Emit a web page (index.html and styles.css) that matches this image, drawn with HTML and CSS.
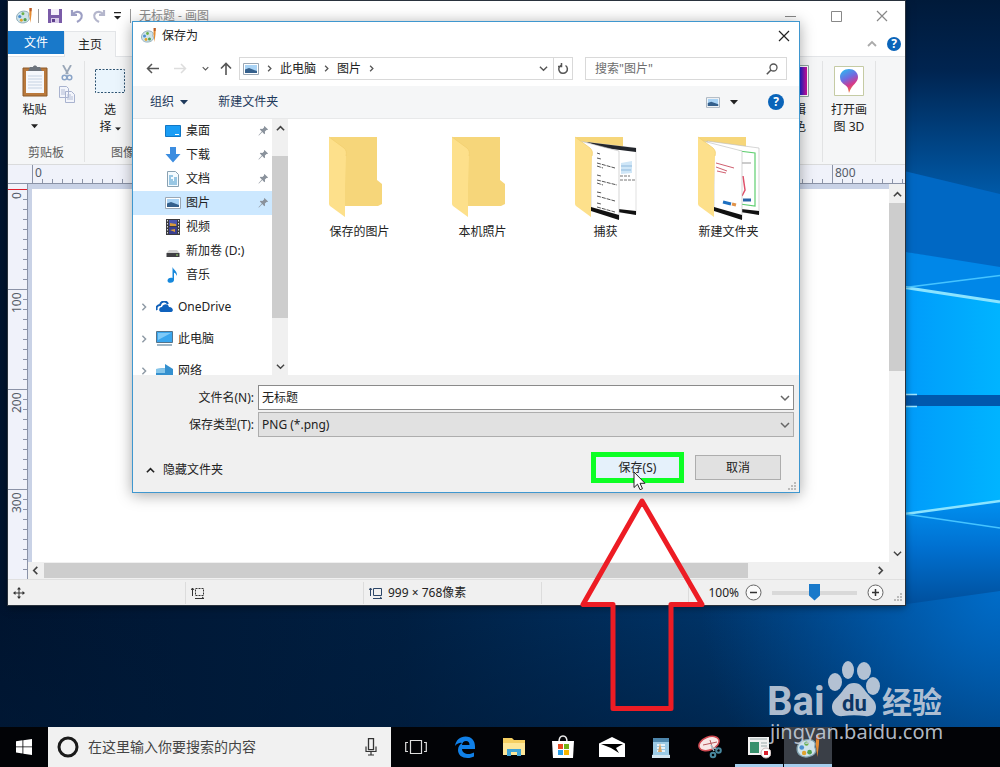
FILE: index.html
```html
<!DOCTYPE html>
<html lang="zh-CN">
<head>
  <meta charset="UTF-8">
  <title>无标题 - 画图</title>
  <link rel="stylesheet" href="styles.css">
</head>
<body>
  <!-- shared icons -->
  <svg class="defs" width="0" height="0">
    <symbol id="i-palette" viewBox="0 0 16 16">
      <path d="M1 9c0-4 4-6.500 8-6 3 .4 4 2 3.500 3.500-.3 1-.2 1.700.3 2.500.8 1.500-.8 4.500-5 5C4 14.500 1 12.500 1 9z" fill="#cfe3ea" stroke="#7fa0ae" stroke-width=".8"/>
      <circle cx="4" cy="8" r="1.500" fill="#4b8fd0"/><circle cx="7" cy="5.500" r="1.400" fill="#6bb04a"/>
      <circle cx="5.500" cy="11.500" r="1.400" fill="#e0a32e"/><circle cx="9" cy="11" r="1.500" fill="#4fa052"/>
      <path d="M13.200 0h2l-.2 6-1 8-1-8z" fill="#e58b31"/><path d="M13.200 0h2l-.1 3h-1.800z" fill="#b65a2a"/>
    </symbol>
    <symbol id="i-up" viewBox="0 0 10 10"><path d="M1 7l4-4 4 4" fill="none" stroke="currentColor" stroke-width="1.800"/></symbol>
    <symbol id="i-down" viewBox="0 0 10 10"><path d="M1 3l4 4 4-4" fill="none" stroke="currentColor" stroke-width="1.500"/></symbol>
    <symbol id="i-left" viewBox="0 0 10 10"><path d="M7 1L3 5l4 4" fill="none" stroke="currentColor" stroke-width="1.800"/></symbol>
    <symbol id="i-right" viewBox="0 0 10 10"><path d="M3 1l4 4-4 4" fill="none" stroke="currentColor" stroke-width="1.800"/></symbol>
    <symbol id="i-caret" viewBox="0 0 8 5"><path d="M0 0h8L4 4.500z" fill="currentColor"/></symbol>
    <symbol id="i-close" viewBox="0 0 12 12"><path d="M1 1l10 10M11 1L1 11" fill="none" stroke="currentColor" stroke-width="1.200"/></symbol>
    <symbol id="i-pin" viewBox="0 0 12 12">
      <path d="M7 1l4 4-1 .5-.7-.1L7.500 7.200l.2 2-.8.8L4.700 7.700 1 11.500l-.5-.4L4.200 7.200 2 5l.8-.8 2 .2 1.800-1.800-.1-.8z" fill="#8a929c"/>
    </symbol>
    <symbol id="i-picture" viewBox="0 0 16 12">
      <path d="M.5.500h15v11H.5z" fill="#fff" stroke="#9aa7b4"/>
      <path d="M2 2h12v8H2z" fill="#a9d3f5"/><path d="M2 6.500l4-1.500 8 3v2H2z" fill="#35608c"/>
    </symbol>
    <symbol id="i-folder-back" viewBox="0 0 64 84">
      <path d="M2 1h47v43l5 4v20l-4 2H16z" fill="#f6d67a"/>
    </symbol>
    <symbol id="i-folder-front" viewBox="0 0 64 84">
      <path d="M1 1l15 11c2 2 3 4 2 8l-1 30v31L2 70c-1-1-1-2-1-3z" fill="#fde08b"/>
      <path d="M1 1l15 11c2 2 3 4 2 8" fill="none" stroke="#f3cf70" stroke-width=".8"/>
    </symbol>
  </svg>

  <div class="desktop">
    <svg class="wallpaper" viewBox="0 0 1000 727" preserveAspectRatio="none" aria-hidden="true">
      <defs>
        <linearGradient id="base" x1="0" x2="1"><stop offset="0" stop-color="#00142f"/><stop offset=".4" stop-color="#001f42"/><stop offset=".7" stop-color="#003468"/><stop offset="1" stop-color="#0057a8"/></linearGradient>
        <linearGradient id="sky" x1="0" y1="0" x2="0" y2="1"><stop offset="0" stop-color="#001a3a"/><stop offset=".35" stop-color="#002450"/><stop offset="1" stop-color="#005cac"/></linearGradient>
        <linearGradient id="pane" x1="0" x2="1"><stop offset="0" stop-color="#009afa"/><stop offset="1" stop-color="#00b4ff"/></linearGradient>
        <linearGradient id="low" x1="0" y1="0" x2="0" y2="1"><stop offset="0" stop-color="#0090f0"/><stop offset=".45" stop-color="#0070d0"/><stop offset="1" stop-color="#004f9c"/></linearGradient>
        <radialGradient id="glow" gradientUnits="userSpaceOnUse" cx="1000" cy="590" r="300"><stop offset="0" stop-color="#006cc8"/><stop offset="1" stop-color="#004a92" stop-opacity="0"/></radialGradient>
        <linearGradient id="fade" x1="0" y1="0" x2="0" y2="1"><stop offset="0" stop-color="#001a38" stop-opacity="0"/><stop offset="1" stop-color="#001a38" stop-opacity=".5"/></linearGradient>
      </defs>
      <rect width="1000" height="727" fill="url(#base)"/>
      <rect y="600" width="1000" height="127" fill="url(#fade)"/>
      <path d="M700 500h300v227H700z" fill="url(#glow)"/>
      <path d="M900 0h100v200H900z" fill="url(#sky)"/>
      <path d="M900 170l100 24v75l-100-18z" fill="#0068c4"/>
      <path d="M900 251l100 16v36H900z" fill="#0087e8"/>
      <path d="M900 287l100 15v93H900z" fill="url(#pane)"/>
      <path d="M900 395h100v11H900z" fill="#0058ad"/>
      <path d="M900 406h100v96l-95 12h-5z" fill="url(#pane)"/>
      <path d="M900 514l100-13v90l-100 14z" fill="url(#low)"/>
      <path d="M905 287.500l95 14.500" stroke="#8be4ff" stroke-width="3"/>
      <path d="M905 287.500l95-12" stroke="#45c4ff" stroke-width="1.500"/>
      <path d="M905 514l95-13" stroke="#8be4ff" stroke-width="2.500"/>
      <path d="M905 514l95 14" stroke="#45c4ff" stroke-width="1.500"/>
      <path d="M905 394.500h12M905 406.500h12" stroke="#9fe6ff" stroke-width="1.500"/>
    </svg>

    <!-- Paint window -->
    <section class="paint">
      <header class="paint-title">
        <svg width="18" height="17"><use href="#i-palette"/></svg>
        <i class="bar"></i>
        <button class="qa" aria-label="保存"><svg width="14" height="14" viewBox="0 0 14 14"><path d="M0 0h14v14H0z" fill="#7a5ba8"/><path d="M3 0h8v6H3z" fill="#f4effa"/><path d="M3 9h8v5H3z" fill="#d8cbe8"/><path d="M4 10h3v3H4z" fill="#5d3f8d"/></svg></button>
        <button class="qa" aria-label="撤消"><svg width="14" height="14" viewBox="0 0 14 14"><path d="M2 1v5h5M2.500 5.500C5 2.500 9 2 11 4.500c2 2.800.5 6-4 8.500" fill="none" stroke="#9d9fc4" stroke-width="2.200"/></svg></button>
        <button class="qa" aria-label="重做"><svg width="14" height="14" viewBox="0 0 14 14"><path d="M12 1v5H7M11.500 5.500C9 2.500 5 2 3 4.500c-2 2.800-.5 6 4 8.500" fill="none" stroke="#b4b6cc" stroke-width="2.200"/></svg></button>
        <button class="qa narrow" aria-label="自定义"><svg width="7" height="8" viewBox="0 0 7 8"><path d="M0 0h7v1.200H0zM0 4h7L3.500 7.500z" fill="#222"/></svg></button>
        <i class="bar"></i>
        <h1>无标题 - 画图</h1>
        <div class="win-buttons">
          <button aria-label="最小化"><svg width="11" height="11"><path d="M0 5.500h11" stroke="#888"/></svg></button>
          <button aria-label="最大化"><svg width="11" height="11"><path d="M.5.500h10v10H.5z" fill="none" stroke="#888"/></svg></button>
          <button aria-label="关闭"><svg width="12" height="12"><use href="#i-close"/></svg></button>
        </div>
      </header>

      <nav class="tabs">
        <button class="tab file">文件</button>
        <button class="tab home">主页</button>
        <span class="grow"></span>
        <svg class="collapse" width="10" height="10"><use href="#i-up"/></svg>
        <button class="help small" aria-label="帮助">?</button>
      </nav>

      <div class="ribbon">
        <div class="group clipboard">
          <div class="group-body">
            <button class="tool">
              <svg width="26" height="32" viewBox="0 0 26 32"><path d="M1 3h24v28H1z" fill="#b9793c"/><path d="M1 3h24v28H1z" fill="none" stroke="#8c5a2b"/><path d="M4 6h18v22H4z" fill="#f5f8fc"/><path d="M6 11h14M6 14h14M6 17h14M6 20h14M6 23h14" stroke="#c5d2e2"/><path d="M8 2h3c0-2 4-2 4 0h3l2 4H6z" fill="#6d747d"/></svg>
              <span>粘贴</span>
              <svg width="7" height="5"><use href="#i-caret"/></svg>
            </button>
            <div class="minis">
              <svg width="12" height="16" viewBox="0 0 12 16"><path d="M2 0l5 9M10 0L5 9" stroke="#9aa7b8" stroke-width="1.800"/><circle cx="3.500" cy="12.500" r="2.300" fill="none" stroke="#8aa4c8" stroke-width="1.500"/><circle cx="8.500" cy="12.500" r="2.300" fill="none" stroke="#8aa4c8" stroke-width="1.500"/></svg>
              <svg width="16" height="17" viewBox="0 0 16 17"><path d="M.5.500h7l2 2v9h-9zM6.500 5.500h6l3 3v8h-9z" fill="#f3f5fb" stroke="#a9b3cf"/><path d="M2 4h4M2 6h4M2 8h4M8 9h4M8 11h6M8 13h6" stroke="#b3bdd6"/></svg>
            </div>
          </div>
          <p>剪贴板</p>
        </div>
        <div class="group image">
          <div class="group-body">
            <button class="tool">
              <svg width="32" height="32" viewBox="0 0 32 32"><path d="M1.500 4.500h29v23h-29z" fill="#eaf5fd" stroke="#2f5573" stroke-dasharray="2 1.500"/></svg>
              <span>选<br>择 <svg width="6" height="4" viewBox="0 0 8 5"><use href="#i-caret"/></svg></span>
            </button>
          </div>
          <p>图像</p>
        </div>
        <span class="grow"></span>
        <div class="group colors">
          <button class="tool">
            <svg width="30" height="32" viewBox="0 0 30 32"><defs><linearGradient id="hue"><stop offset="0" stop-color="#f00"/><stop offset=".4" stop-color="#0c0"/><stop offset=".75" stop-color="#3020d0"/><stop offset="1" stop-color="#d0109a"/></linearGradient></defs><path d="M.5.500h29v31H.5z" fill="#fff" stroke="#8fa6a0"/><path d="M2 2h26v28H2z" fill="url(#hue)"/></svg>
            <span>编辑<br>颜色</span>
          </button>
        </div>
        <div class="group p3d">
          <button class="tool">
            <svg width="30" height="32" viewBox="0 0 30 32"><defs><linearGradient id="drop" x1=".2" y1="0" x2=".6" y2="1"><stop offset="0" stop-color="#2db7f0"/><stop offset=".4" stop-color="#6f6be0"/><stop offset=".7" stop-color="#d4388c"/><stop offset="1" stop-color="#f5842c"/></linearGradient></defs><path d="M.5 1.500h29v29H.5z" fill="#fff" stroke="#c5cba4"/><path d="M15 4c5 0 9 3.500 9 8 0 6-6 7-9 16-1-5-1-6-4-8-3-2-5-4-5-8 0-4.500 4-8 9-8z" fill="url(#drop)"/></svg>
            <span>打开画<br>图 3D</span>
          </button>
        </div>
      </div>

      <div class="ruler-h">
        <span>0</span><span>100</span><span>200</span><span>300</span><span>400</span><span>500</span><span>600</span><span>700</span><span>800</span>
      </div>

      <div class="work">
        <div class="ruler-v"><span>0</span><span>100</span><span>200</span><span>300</span></div>
        <div class="work-main">
          <div class="work-row">
            <div class="sheet"></div>
            <div class="scroll-v">
              <svg width="9" height="9"><use href="#i-up"/></svg>
              <div class="track"><div class="thumb"></div></div>
              <svg width="9" height="9"><use href="#i-down"/></svg>
            </div>
          </div>
          <div class="scroll-h">
            <svg width="9" height="9"><use href="#i-left"/></svg>
            <div class="track"><div class="thumb"></div></div>
            <svg width="9" height="9"><use href="#i-right"/></svg>
          </div>
        </div>
      </div>

      <footer class="status">
        <div class="cell"><svg width="12" height="12" viewBox="0 0 12 12"><path d="M6 1v10M1 6h10" stroke="#333"/><path d="M4 2.500L6 0l2 2.500zM4 9.500L6 12l2-2.500zM2.500 4L0 6l2.500 2zM9.500 4L12 6l-2.500 2z" fill="#333"/></svg></div>
        <div class="cell"><svg width="14" height="12" viewBox="0 0 14 12"><path d="M4.500 1.500h8v7h-8z" fill="none" stroke="#333" stroke-dasharray="2 1"/><path d="M1.500 1v8M0 3l1.500-2L3 3M4 11.500h9M11 10l2 1.500" fill="none" stroke="#333"/></svg></div>
        <div class="cell"><svg width="14" height="12" viewBox="0 0 14 12"><path d="M4.500 1.500h8v7h-8z" fill="none" stroke="#2c4668"/><path d="M1.500 1v8M0 3l1.500-2L3 3M4 11.500h9M11 10l2 1.500" fill="none" stroke="#2c4668"/></svg><span>999 × 768像素</span></div>
        <div class="cell last"></div>
        <div class="zoom">
          <label for="zoom">100%</label>
          <button aria-label="缩小"><svg width="17" height="17"><circle cx="8.500" cy="8.500" r="7.500" fill="#fafafa" stroke="#666"/><path d="M5 8.500h7" stroke="#333" stroke-width="1.500"/></svg></button>
          <input id="zoom" type="range" min="0" max="100" value="50">
          <button aria-label="放大"><svg width="17" height="17"><circle cx="8.500" cy="8.500" r="7.500" fill="#fafafa" stroke="#666"/><path d="M5 8.500h7M8.500 5v7" stroke="#333" stroke-width="1.500"/></svg></button>
          <svg class="grip" width="9" height="9" viewBox="0 0 9 9"><path d="M6 0h2v2H6zM3 3h2v2H3zM6 3h2v2H6zM0 6h2v2H0zM3 6h2v2H3zM6 6h2v2H6z" fill="#bbb"/></svg>
        </div>
      </footer>
    </section>

    <!-- Save as dialog -->
    <section class="dialog" role="dialog" aria-labelledby="dlg-title">
      <header class="dialog-title">
        <svg width="17" height="16"><use href="#i-palette"/></svg>
        <h2 id="dlg-title">保存为</h2>
        <button aria-label="关闭"><svg width="12" height="12"><use href="#i-close"/></svg></button>
      </header>

      <div class="nav">
        <button aria-label="后退"><svg width="13" height="11" viewBox="0 0 13 11"><path d="M13 5.500H1.500M6 1L1.500 5.500 6 10" fill="none" stroke="#555" stroke-width="1.500"/></svg></button>
        <button aria-label="前进"><svg width="13" height="11" viewBox="0 0 13 11"><path d="M0 5.500h11.500M7 1l4.500 4.500L7 10" fill="none" stroke="#ddd" stroke-width="1.500"/></svg></button>
        <button class="recent" aria-label="最近"><svg width="7" height="7"><use href="#i-down"/></svg></button>
        <button class="up" aria-label="上移"><svg width="12" height="13" viewBox="0 0 12 13"><path d="M6 13V1.500M1 6.500l5-5 5 5" fill="none" stroke="#555" stroke-width="1.600"/></svg></button>
        <div class="address">
          <svg width="16" height="12"><use href="#i-picture"/></svg>
          <svg class="sep" width="7" height="7"><use href="#i-right"/></svg>
          <a href="#">此电脑</a>
          <svg class="sep" width="7" height="7"><use href="#i-right"/></svg>
          <a href="#">图片</a>
          <svg class="sep" width="7" height="7"><use href="#i-right"/></svg>
          <span class="grow"></span>
          <button aria-label="历史"><svg width="9" height="9"><use href="#i-down"/></svg></button>
          <button class="refresh" aria-label="刷新"><svg width="12" height="12" viewBox="0 0 12 12"><path d="M8.500 2.500A4.300 4.300 0 1 1 4 2.300M4.500 0v3.500H1" fill="none" stroke="#555" stroke-width="1.500"/></svg></button>
        </div>
        <div class="search">
          <input type="text" placeholder="搜索&quot;图片&quot;" aria-label="搜索">
          <svg width="12" height="12" viewBox="0 0 12 12"><circle cx="7.500" cy="4.500" r="3.500" fill="none" stroke="#555" stroke-width="1.300"/><path d="M5 7L.8 11.200" stroke="#555" stroke-width="1.600"/></svg>
        </div>
      </div>

      <div class="toolbar">
        <button>组织 <svg width="8" height="5"><use href="#i-caret"/></svg></button>
        <button>新建文件夹</button>
        <span class="grow"></span>
        <button class="view" aria-label="视图"><svg width="14" height="11"><use href="#i-picture"/></svg><svg width="8" height="5"><use href="#i-caret"/></svg></button>
        <button class="help" aria-label="帮助">?</button>
      </div>

      <div class="browser">
        <ul class="tree">
          <li><svg width="16" height="12" viewBox="0 0 16 12"><path d="M.5.500h15v11H.5z" fill="#1a9df5" stroke="#1277c4"/><path d="M10 9h4v1h-4z" fill="#fff"/></svg><span>桌面</span><svg class="pin" width="11" height="11"><use href="#i-pin"/></svg></li>
          <li><svg width="16" height="16" viewBox="0 0 16 16"><path d="M5 0h6v7h4.500L8 15.500.5 7H5z" fill="#3c8de0"/></svg><span>下载</span><svg class="pin" width="11" height="11"><use href="#i-pin"/></svg></li>
          <li><svg width="16" height="16" viewBox="0 0 16 16"><path d="M2.500.500h8l3 3v12h-11z" fill="#f4fbff" stroke="#8aa2b2"/><path d="M4 5h4M4 7h2M9 7h3M4 9h4M9 9h3M4 11h8M4 13h8" stroke="#3f93c8"/></svg><span>文档</span><svg class="pin" width="11" height="11"><use href="#i-pin"/></svg></li>
          <li class="on"><svg width="16" height="12"><use href="#i-picture"/></svg><span>图片</span><svg class="pin" width="11" height="11"><use href="#i-pin"/></svg></li>
          <li><svg width="16" height="16" viewBox="0 0 16 16"><path d="M1 0h14v16H1z" fill="#3b3b40"/><path d="M4 1h8v6H4z" fill="#4a55b0"/><path d="M4 8h8v7H4z" fill="#3a3f90"/><path d="M5 4l6 1v2H5zM5 11l5-1v3z" fill="#d79a3c"/><path d="M2.500 1v14M13.500 1v14" stroke="#ddd" stroke-dasharray="1.500 1.500"/></svg><span>视频</span></li>
          <li><svg width="16" height="16" viewBox="0 0 16 16"><path d="M4 7h8l2.500 3h-13z" fill="#d0d0d0"/><path d="M1.500 10h13v4h-13z" fill="#3e3e42"/><path d="M11 12h2" stroke="#9fe070"/></svg><span>新加卷 (D:)</span></li>
          <li><svg width="16" height="16" viewBox="0 0 16 16"><path d="M7.500 0c1 3 5 4 4.500 9-.8-2-1.800-3-3-3.200V13c0 1.500-1.500 2.800-3.500 2.800S2.500 15 2.500 13.500s1.500-2.700 3.500-2.700c.6 0 1 .1 1.500.3z" fill="#1688dc"/></svg><span>音乐</span></li>
          <li class="root"><svg class="arrow" width="8" height="8"><use href="#i-right"/></svg><svg width="17" height="11" viewBox="0 0 17 11"><path d="M1 9C-.5 6 2 4 4 4c1-4 6-5 8-1" fill="none" stroke="#0f5fb8" stroke-width="2"/><path d="M5 11c-3-1-2-5 1-5 1-3 6-4 7 0 4 0 5 4 2.500 5z" fill="#0f62bd"/></svg><span>OneDrive</span></li>
          <li class="root"><svg class="arrow" width="8" height="8"><use href="#i-right"/></svg><svg width="17" height="15" viewBox="0 0 17 15"><path d="M.5.500h16v11H.5z" fill="#3aa6ee" stroke="#54748c"/><path d="M2 2h13L2 9z" fill="#7fcaf8"/><path d="M1 14h15" stroke="#7e9cb2" stroke-width="1.500"/></svg><span>此电脑</span></li>
          <li class="root"><svg class="arrow" width="8" height="8"><use href="#i-right"/></svg><svg width="17" height="15" viewBox="0 0 17 15"><path d="M0 6l9-1V1l8 5v7l-6 2-11-2z" fill="#3490cf"/><path d="M0 6l9-1v5H0z" fill="#86c6ea"/></svg><span>网络</span></li>
        </ul>
        <div class="tree-scroll">
          <svg width="9" height="9"><use href="#i-up"/></svg>
          <div class="track"><div class="thumb"></div></div>
          <svg width="9" height="9"><use href="#i-down"/></svg>
        </div>
        <ul class="files">
          <li>
            <svg width="64" height="84"><use href="#i-folder-back"/><use href="#i-folder-front"/></svg>
            <span>保存的图片</span>
          </li>
          <li>
            <svg width="64" height="84"><use href="#i-folder-back"/><use href="#i-folder-front"/></svg>
            <span>本机照片</span>
          </li>
          <li>
            <svg width="64" height="84" viewBox="0 0 64 84">
              <use href="#i-folder-back"/>
              <path d="M10 6l52 6v66l-20-2z" fill="#fff" stroke="#ccc" stroke-width=".6"/>
              <path d="M12 6l50 6v4L30 12z" fill="#22252b"/>
              <path d="M44 73l18 2v4l-18-3z" fill="#111"/>
              <path d="M47 27l11-2v12l-11 1z" fill="#cfe6f7"/>
              <path d="M47 30h11M47 34h10" stroke="#8fb9dc"/><path d="M46 40h10M46 44h15" stroke="#777" stroke-dasharray="3 1"/>
              <path d="M6 5l39 10v68l-28-10V20z" fill="#fff" stroke="#bbb" stroke-width=".6"/>
              <path d="M23 17l3 1M23 22l4 1M23 27l18 5M23 30l6 2M23 39l4 1M23 44l20 5M23 47l6 2M23 56l5 1M23 60l18 5M23 67l4 1M23 71l18 5" stroke="#555" stroke-dasharray="4 1"/>
              <path d="M17 71l28 8v5L17 75z" fill="#111"/>
              <use href="#i-folder-front"/>
            </svg>
            <span>捕获</span>
          </li>
          <li>
            <svg width="64" height="84" viewBox="0 0 64 84">
              <use href="#i-folder-back"/>
              <path d="M10 5l52 7v66l-20-2z" fill="#fff" stroke="#bbb" stroke-width=".6"/>
              <path d="M34 14l24 3v53l-15-2" fill="none" stroke="#5fcf70" stroke-width="1.200"/>
              <path d="M45 27h9" stroke="#999"/><path d="M46 40l2 14-3 6" fill="none" stroke="#e0506a" stroke-width="1.500"/>
              <path d="M46 64h8" stroke="#2864a8" stroke-width="3"/><path d="M44 73l18 2v4l-18-3z" fill="#111"/>
              <path d="M6 5l39 10v68l-28-10V20z" fill="#fff" stroke="#bbb" stroke-width=".6"/>
              <path d="M19 27l18 5M19 31l11 4M20 35l9 2" stroke="#d06070"/>
              <path d="M26 66l8 2" stroke="#1d6fc0" stroke-width="3"/><path d="M35 68l4 1" stroke="#e0934a" stroke-width="3"/>
              <path d="M17 71l28 8v5L17 75z" fill="#111"/>
              <use href="#i-folder-front"/>
            </svg>
            <span>新建文件夹</span>
          </li>
        </ul>
      </div>

      <form class="save-form" onsubmit="return false">
        <div class="fields">
          <label for="name">文件名(N):</label>
          <div class="combo"><input id="name" type="text" value="无标题"><svg width="10" height="10"><use href="#i-down"/></svg></div>
          <label for="type">保存类型(T):</label>
          <div class="combo gray"><select id="type"><option>PNG (*.png)</option></select><svg width="10" height="10"><use href="#i-down"/></svg></div>
        </div>
        <div class="actions">
          <button type="button" class="hide"><svg width="9" height="9"><use href="#i-up"/></svg>隐藏文件夹</button>
          <span class="grow"></span>
          <button class="save">保存(S)</button>
          <button type="button" class="cancel">取消</button>
        </div>
        <svg class="corner" width="9" height="9" viewBox="0 0 9 9"><path d="M6 0h2v2H6zM3 3h2v2H3zM6 3h2v2H6zM0 6h2v2H0zM3 6h2v2H3zM6 6h2v2H6z" fill="#bbb"/></svg>
      </form>
    </section>
  </div>

  <footer class="taskbar">
    <button class="start" aria-label="开始"><svg width="16" height="16" viewBox="0 0 16 16"><path d="M0 2.200l6.500-.9v6.200H0zM7.300 1.200L16 0v7.500H7.300zM0 8.300h6.500v6.200L0 13.600zM7.300 8.300H16V16l-8.700-1.200z" fill="#fff"/></svg></button>
    <div class="cortana">
      <svg width="22" height="22"><circle cx="11" cy="11" r="9" fill="none" stroke="#1a1a1a" stroke-width="3"/></svg>
      <input type="text" placeholder="在这里输入你要搜索的内容" aria-label="搜索">
      <svg width="12" height="18" viewBox="0 0 12 18"><path d="M3.500.700h5v11h-5z" fill="none" stroke="#333" stroke-width="1.300"/><path d="M1 8.500v5h10v-5M6 13.500v3M3 17h6" fill="none" stroke="#333" stroke-width="1.200"/></svg>
    </div>
    <button class="app" aria-label="任务视图"><svg width="22" height="16" viewBox="0 0 22 16"><path d="M5.500 1.500h11v13h-11zM3 3.500H.7v9H3M19 3.500h2.300v9H19" fill="none" stroke="#ddd" stroke-width="1.200"/></svg></button>
    <button class="app" aria-label="Edge"><svg width="22" height="22" viewBox="0 0 22 22"><path d="M1 10C2 4 6 .5 11.500.500 18 .5 21 5 21 10.500V13H8c.2 3.500 3 5 6.500 5 2 0 4-.6 5.500-1.500v4C18.500 21.300 16 22 13.500 22 8 22 4 19 4 14c0-3.500 2-6.200 5-7.500C5 6.500 2.500 8 1 10zm7-1h7.500c0-2.500-1.200-4-3.500-4S8.300 6.500 8 9z" fill="#1080e8"/></svg></button>
    <button class="app" aria-label="文件资源管理器"><svg width="22" height="18" viewBox="0 0 22 18"><path d="M0 0h9l2 2h11v15H0z" fill="#f5cf62"/><path d="M0 5h22v12H0z" fill="#fde799"/><path d="M4 18v-7h14v7h-4v-4H8v4z" fill="#3fa4d8"/></svg></button>
    <button class="app" aria-label="应用商店"><svg width="24" height="24" viewBox="0 0 24 24"><path d="M8 7c0-8 8-8 8 0" fill="none" stroke="#eee" stroke-width="1.500"/><path d="M1 6h22l-1 17H2z" fill="#fff"/><path d="M7 9h5v5H7z" fill="#e84c22"/><path d="M13 9h5v5h-5z" fill="#73b216"/><path d="M7 15h5v5H7z" fill="#2a9fe8"/><path d="M13 15h5v5h-5z" fill="#f8b500"/></svg></button>
    <button class="app" aria-label="邮件"><svg width="26" height="20" viewBox="0 0 26 20"><path d="M0 6.500L13 0l13 6.500V20H0z" fill="#fff"/><path d="M2 7h22l-7 4 3 5-8-5z" fill="#000"/></svg></button>
    <button class="app" aria-label="记事本"><svg width="18" height="21" viewBox="0 0 18 21"><path d="M1 1h16v15l1 5H0l1-5z" fill="#9ccbe6"/><path d="M1 1h16v4H1z" fill="#4d86ac"/><path d="M5 8h8M5 11h8M5 14h8" stroke="#fff" stroke-width="1.500"/><path d="M8 6l2 9H6z" fill="#d8a56a"/><path d="M0 18h18v3H0z" fill="#d5e6f0"/></svg></button>
    <button class="app" aria-label="截图工具"><svg width="24" height="24" viewBox="0 0 24 24"><ellipse cx="11" cy="8.500" rx="10.500" ry="6.500" transform="rotate(-22 11 8.500)" fill="#f8e9e8" stroke="#cf4a52" stroke-width="1.500"/><path d="M12 5l3 10M5 10l14-3" stroke="#b8575c"/><path d="M13 10l3 6M16 13l4 1" stroke="#9fb8c2" stroke-width="1.500"/><circle cx="15" cy="20" r="2.300" fill="none" stroke="#48879e" stroke-width="2"/><circle cx="20.500" cy="15.500" r="2.300" fill="none" stroke="#48879e" stroke-width="2"/></svg></button>
    <button class="app running" aria-label="录屏"><svg width="24" height="24" viewBox="0 0 24 24"><path d="M1 2h21v18H1z" fill="#f2f2f2"/><path d="M3 7h9v11H3z" fill="#38906c"/><path d="M3 4h17M14 8h6M14 11h6" stroke="#9aa"/><circle cx="19" cy="18" r="5" fill="#fff" stroke="#c9b9b9"/><path d="M17 16h4v4h-4z" fill="#d81e2c"/></svg></button>
    <button class="app running active" aria-label="画图"><svg width="26" height="25"><use href="#i-palette"/></svg></button>
  </footer>

  <!-- annotation arrow -->
  <svg class="arrow-mark" width="126" height="216" viewBox="0 0 126 216"><path d="M63 4L4 107.500h30v104h58v-104h31z" fill="none" stroke="#ed1c24" stroke-width="5" stroke-linejoin="round"/></svg>

  <svg class="cursor" width="13" height="20" viewBox="0 0 13 20"><path d="M1 1v15.500l3.500-3.300 2.500 5.500 2.500-1-2.500-5.400h5z" fill="#fff" stroke="#222"/></svg>

  <svg class="watermark" width="184" height="88" viewBox="0 0 184 88">
    <g fill="#c6cfdc" fill-opacity=".9">
      <text class="wm-bai" x="1" y="55">Bai</text>
      <ellipse cx="69" cy="22" rx="7" ry="9"/><ellipse cx="82" cy="10" rx="6" ry="9"/>
      <ellipse cx="98" cy="11" rx="7" ry="9"/><ellipse cx="107" cy="26" rx="7" ry="9"/>
      <path d="M88 23c7 0 9 5 13 10 5 6 9 8 9 14 0 7-5 10-11 9-7-1-15-1-22 0-6 1-11-3-11-9s4-8 9-14c4-5 6-10 13-10z"/>
      <text class="wm-cn" x="116" y="53">经验</text>
      <text class="wm-url" x="4" y="79">jingyan.baidu.com</text>
    </g>
    <text class="wm-du" x="76" y="51">du</text>
  </svg>
</body>
</html>
```

FILE: styles.css
```css
* {
  box-sizing: border-box;
}

body {
  margin: 0;
  height: 100vh;
  display: flex;
  flex-direction: column;
  position: relative;
  overflow: hidden;
  background: #00142f;
  color: #222;
  font-family: "Noto Sans", "Noto Sans CJK SC", sans-serif;
  font-size: 12px;
  line-height: 18px;
}

button,
input,
select {
  font: inherit;
  color: inherit;
  margin: 0;
  padding: 0;
  border: 0;
  background: none;
  outline: none;
}

h1, h2, p, ul {
  margin: 0;
  padding: 0;
  font-size: 12px;
  font-weight: normal;
}

ul {
  list-style: none;
}

svg {
  flex: none;
}

.defs {
  position: absolute;
}

.grow {
  flex: 1;
}

.desktop {
  flex: 1;
  position: relative;
}

.wallpaper {
  position: absolute;
  width: 100%;
  height: 100%;
}

/* Paint window */
.paint {
  position: absolute;
  top: 1px;
  left: 8px;
  right: 95px;
  bottom: 122px;
  display: flex;
  flex-direction: column;
  background: #fff;
  box-shadow: 0 0 0 1px #29323d, 0 2px 8px rgba(0, 0, 0, 0.5);
}

.paint-title {
  display: flex;
  align-items: center;
  height: 30px;
  padding-left: 7px;
}

.bar {
  width: 1px;
  height: 14px;
  margin: 0 5px;
  background: #999;
}

.qa {
  display: flex;
  justify-content: center;
  width: 22px;
}

.qa.narrow {
  width: 15px;
}

.paint-title h1 {
  color: #8b8b8b;
  margin-left: 3px;
}

.win-buttons {
  display: flex;
  margin-left: auto;
  color: #888;
}

.win-buttons button {
  width: 46px;
  height: 30px;
  display: flex;
  align-items: center;
  justify-content: center;
}

.tabs {
  display: flex;
  height: 26px;
  padding-right: 4px;
  align-items: center;
  border-bottom: 1px solid #e3e5e8;
}

.tab {
  height: 23px;
  align-self: flex-start;
}

.tab.file {
  width: 56px;
  color: #fff;
  background: #1979ca;
}

.tab.home {
  width: 52px;
  height: 26px;
  background: #f5f6f7;
  border: 1px solid #e3e5e8;
  border-bottom: 0;
}

.collapse {
  color: #aaa;
  margin-right: 10px;
}

.help {
  width: 16px;
  height: 16px;
  border-radius: 50%;
  background: #0a64b9;
  color: #fff;
  font-weight: bold;
  line-height: 16px;
}

.help.small {
  width: 14px;
  height: 14px;
  line-height: 14px;
}

.ribbon {
  display: flex;
  height: 108px;
  padding: 4px 29px 2px 0;
  background: #f5f6f7;
  border-bottom: 1px solid #dadbdc;
}

.group {
  display: flex;
  flex-direction: column;
  justify-content: space-between;
  border-right: 1px solid #e2e3e4;
}

.group p {
  text-align: center;
  color: #5a5a5a;
}

.group-body {
  display: flex;
}

.clipboard {
  width: 77px;
}

.image {
  width: 77px;
}

.colors {
  width: 57px;
}

.p3d {
  width: 53px;
}

.tool {
  display: flex;
  flex-direction: column;
  align-items: center;
  line-height: 17px;
  padding-top: 4px;
}

.tool > span {
  margin-top: 4px;
}

.tool > span + svg {
  margin-top: 6px;
}

.clipboard .tool {
  width: 53px;
}

.image .tool {
  width: 50px;
}

.minis {
  display: flex;
  flex-direction: column;
  align-items: center;
  gap: 5px;
  padding-top: 4px;
  margin-left: -2px;
}

.ruler-h {
  display: flex;
  height: 19px;
  flex: none;
  padding-left: 24px;
  overflow: hidden;
  background: #f0f2fa;
  border-bottom: 1px solid #8b93a7;
}

.ruler-h span {
  flex: none;
  width: 100px;
  padding-left: 2px;
  color: #555b68;
  border-left: 1px solid #8b93a7;
  line-height: 16px;
  background: repeating-linear-gradient(90deg, transparent 0 9px, #8b93a7 9px 10px) 0 100% / 100% 4px no-repeat;
}

.work {
  flex: 1;
  display: flex;
  min-height: 0;
}

.ruler-v {
  width: 20px;
  flex: none;
  padding-top: 5px;
  overflow: hidden;
  background: #f0f2fa;
  border-right: 1px solid #8b93a7;
}

.ruler-v span {
  display: block;
  height: 100px;
  width: 100%;
  padding-bottom: 2px;
  color: #555b68;
  line-height: 18px;
  writing-mode: vertical-rl;
  transform: rotate(180deg);
  text-align: right;
  border-bottom: 1px solid #8b93a7;
  background: repeating-linear-gradient(0deg, transparent 0 9px, #8b93a7 9px 10px) 0 0 / 4px 100% no-repeat;
}

.ruler-v span:first-child {
  border-color: #e0202e;
}

.work-main {
  flex: 1;
  display: flex;
  flex-direction: column;
}

.work-row {
  flex: 1;
  display: flex;
}

.sheet {
  flex: 1;
  border: solid #c9d2e6;
  border-width: 5px 0 0 4px;
}

.scroll-v,
.tree-scroll {
  width: 16px;
  flex: none;
  display: flex;
  flex-direction: column;
  align-items: center;
  background: #f0f0f0;
  color: #444;
}

.scroll-v {
  padding: 6px 0 4px;
}

.scroll-v .track,
.tree-scroll .track {
  flex: 1;
  width: 100%;
  margin: 4px 0;
}

.thumb {
  background: #cdcdcd;
}

.scroll-v .thumb {
  height: 49%;
}

.scroll-h {
  display: flex;
  align-items: center;
  height: 17px;
  flex: none;
  padding: 0 20px 0 3px;
  background: #f0f0f0;
  color: #444;
}

.scroll-h .track {
  flex: 1;
  height: 15px;
  margin: 0 4px;
}

.scroll-h .thumb {
  width: 85%;
  height: 100%;
}

.status {
  display: flex;
  align-items: center;
  flex: none;
  height: 26px;
  background: #f0f0f0;
  border-top: 1px solid #e0e0e0;
}

.cell {
  display: flex;
  align-items: center;
  gap: 5px;
  width: 178px;
  height: 22px;
  padding-left: 5px;
  border-right: 1px solid #dcdcdc;
}

.cell.last {
  width: 147px;
}

.zoom {
  flex: 1;
  display: flex;
  align-items: center;
  justify-content: flex-end;
  gap: 10px;
  padding-right: 2px;
}

.zoom button,
.nav button,
.toolbar .view {
  display: flex;
  align-items: center;
}

.zoom label {
  margin-right: -4px;
}

.zoom input {
  appearance: none;
  width: 85px;
  height: 17px;
}

.zoom input::-webkit-slider-runnable-track {
  height: 4px;
  background: #d9d9d9;
}

.zoom input::-webkit-slider-thumb {
  appearance: none;
  width: 11px;
  height: 17px;
  margin-top: -7px;
  background: #1979ca;
  clip-path: polygon(0 0, 100% 0, 100% 70%, 50% 100%, 0 70%);
}

.grip {
  align-self: flex-end;
}

/* Save dialog */
.dialog {
  position: absolute;
  top: 21px;
  left: 132px;
  right: 200px;
  bottom: 234px;
  display: flex;
  flex-direction: column;
  background: #fff;
  border: 1px solid #3f97cf;
  box-shadow: 0 2px 14px rgba(0, 0, 0, 0.35);
}

.dialog-title {
  display: flex;
  align-items: center;
  height: 28px;
  padding: 0 9px 0 7px;
  gap: 5px;
}

.dialog-title h2 {
  flex: 1;
}

.dialog-title button {
  display: flex;
}

.nav {
  display: flex;
  align-items: center;
  padding: 7px 12px 6px 13px;
  color: #555;
}

.nav > button {
  width: 28px;
}

.nav > .recent {
  width: 18px;
}

.nav > .up {
  width: 19px;
}

.address,
.search {
  display: flex;
  align-items: center;
  height: 23px;
  border: 1px solid #d9d9d9;
}

.address {
  flex: 1;
  padding-left: 3px;
}

.address a {
  color: #222;
  text-decoration: none;
}

.sep {
  margin: 0 7px;
}

.address button {
  height: 21px;
  width: 19px;
  justify-content: center;
}

.address .refresh {
  border-left: 1px solid #d9d9d9;
}

.search {
  width: 202px;
  margin-left: 12px;
  padding: 0 8px 0 9px;
}

.search input {
  flex: 1;
  min-width: 0;
}

.search input::placeholder {
  color: #6d6d6d;
}

.toolbar {
  display: flex;
  align-items: center;
  gap: 30px;
  height: 33px;
  padding: 0 15px 0 17px;
  color: #1e395b;
  background: #f5f6f7;
  border-bottom: 1px solid #e8e9ea;
}

.toolbar button svg {
  margin-left: 3px;
  vertical-align: middle;
}

.toolbar .view {
  gap: 7px;
  color: #222;
}

.browser {
  flex: 1;
  display: flex;
  min-height: 0;
}

.tree {
  width: 139px;
  flex: none;
  overflow: hidden;
}

.tree li {
  display: flex;
  align-items: center;
  gap: 5px;
  height: 24px;
  padding: 0 3px 1px 32px;
}

.tree li.root {
  margin-top: 8px;
  padding-left: 7px;
}

.tree .arrow {
  color: #8e9aa5;
  margin-right: 3px;
}

.tree .on {
  background: #cce8ff;
}

.pin {
  margin-left: auto;
}

.tree-scroll {
  padding: 5px 0 4px;
}

.tree-scroll .track {
  margin-top: 23px;
}

.tree-scroll .thumb {
  height: 80%;
}

.files {
  flex: 1;
  display: flex;
  flex-wrap: wrap;
  align-content: flex-start;
  padding: 17px 0 0 10px;
}

.files li {
  width: 123px;
  display: flex;
  flex-direction: column;
  align-items: center;
  gap: 3px;
}

.save-form {
  position: relative;
  padding: 10px 5px 9px 1px;
  background: #f0f0f0;
}

.fields {
  display: grid;
  grid-template-columns: 120px 1fr;
  gap: 2px 4px;
  align-items: center;
}

.fields label {
  text-align: right;
}

.combo {
  display: flex;
  align-items: center;
  height: 25px;
  padding: 0 3px;
  background: #fff;
  border: 1px solid #8a8a8a;
  color: #666;
}

.combo.gray {
  background: #e1e1e1;
  border-color: #adadad;
}

.combo input,
.combo select {
  flex: 1;
  appearance: none;
  color: #222;
}

.actions {
  display: flex;
  align-items: center;
  gap: 11px;
  margin-top: 15px;
  padding: 0 13px 0 12px;
}

.hide {
  display: flex;
  align-items: center;
  gap: 8px;
  padding-top: 5px;
}

.save {
  width: 93px;
  height: 31px;
  background: #e5f1fb;
  border: 5px solid #0cff24;
}

.cancel {
  width: 86px;
  height: 25px;
  background: #e1e1e1;
  border: 1px solid #adadad;
}

.corner {
  position: absolute;
  right: 2px;
  bottom: 1px;
}

/* Taskbar */
.taskbar {
  display: flex;
  height: 40px;
  flex: none;
  background: #020306;
}

.start {
  display: flex;
  align-items: center;
  justify-content: center;
  width: 48px;
}

.cortana {
  display: flex;
  align-items: center;
  gap: 9px;
  width: 343px;
  padding: 0 14px 0 9px;
  background: #f1f1f1;
  font-size: 14px;
}

.cortana input {
  flex: 1;
}

.cortana input::placeholder {
  color: #444;
}

.app {
  width: 49px;
  display: flex;
  align-items: center;
  justify-content: center;
  border-top: 3px solid transparent;
  border-bottom: 3px solid transparent;
}

.app.running {
  width: 48px;
  margin-left: 1px;
  border-bottom-color: #a5cdec;
}

.app.active {
  background: #3a3f47;
  border-top-color: #3a3f47;
}

/* Overlays */
.arrow-mark,
.cursor,
.watermark {
  position: absolute;
  pointer-events: none;
}

.arrow-mark {
  left: 579px;
  top: 497px;
}

.cursor {
  left: 633px;
  top: 471px;
}

.watermark {
  right: 50px;
  top: 660px;
}

.wm-bai {
  font: bold 40px Roboto, sans-serif;
}

.wm-du {
  font: bold 22px Roboto, sans-serif;
  fill: #0b3565;
}

.wm-cn {
  font: bold 30px "Noto Sans CJK SC", sans-serif;
}

.wm-url {
  font: 20px "Noto Sans", sans-serif;
}
```
